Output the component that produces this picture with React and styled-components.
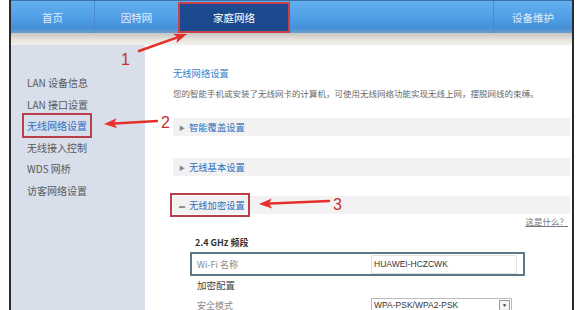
import React from 'react';
import styled, { createGlobalStyle } from 'styled-components';

const GlobalStyle = createGlobalStyle`
  html, body {
    margin: 0;
    padding: 0;
    background: #fff;
  }
  body {
    font-family: "Noto Sans CJK SC", "Liberation Sans", sans-serif;
  }
`;

const Page = styled.div`
  position: relative;
  width: 577px;
  height: 310px;
  overflow: hidden;
  padding-left: 9px;
  box-sizing: border-box;
  background: #fff;
`;

const Frame = styled.div`
  width: 565px;
  height: 310px;
  box-sizing: border-box;
  border-left: 2px solid #2a2a2e;
  border-right: 2px solid #2a2a2e;
  display: flex;
  flex-direction: column;
`;

const TopBar = styled.div`
  height: 33px;
  flex-shrink: 0;
  display: flex;
  align-items: stretch;
  background: linear-gradient(#63afef 0%, #4d9ce4 60%, #4590d8 85%, #6d9fcc 100%);
  border-top: 1px solid #3a6fa8;
  box-sizing: border-box;
`;

const Tab = styled.div`
  width: ${p => p.$w}px;
  display: flex;
  align-items: center;
  justify-content: center;
  font-size: 10.5px;
  color: #e1eefb;
  border-right: ${p => (p.$divider ? '1px solid #4a8bcc' : 'none')};
  box-sizing: border-box;
`;

const ActiveTab = styled(Tab)`
  background: #1d4a8e;
  color: #fff;
  border: 2px solid #c9414c;
  margin: 1px 0 0;
`;

const Spacer = styled.div`
  flex: 1;
  border-right: 1px solid #4a8bcc;
`;

const Band = styled.div`
  height: 12px;
  flex-shrink: 0;
  background: linear-gradient(#c6c4c2, #e9e6e0 60%, #f3f1ec);
`;

const Body = styled.div`
  flex: 1;
  display: flex;
  min-height: 0;
`;

const Sidebar = styled.div`
  width: 134px;
  background: #d8deea;
  padding: 27px 0 0 16px;
  box-sizing: border-box;
  display: flex;
  flex-direction: column;
`;

const SideItem = styled.div`
  height: 21.5px;
  flex-shrink: 0;
  display: flex;
  align-items: center;
  font-size: 10px;
  color: ${p => (p.$active ? '#2f6fc2' : '#5a5a5a')};
`;

const SideBox = styled.span`
  outline: ${p => (p.$boxed ? '2px solid #b8404a' : 'none')};
  outline-offset: 3px;
`;

const Main = styled.div`
  flex: 1;
  background: #fff;
  padding: 21px 2px 0 28px;
  box-sizing: border-box;
  display: flex;
  flex-direction: column;
  overflow: hidden;

  & > * {
    flex-shrink: 0;
  }
`;

const Title = styled.div`
  font-size: 9.3px;
  color: #3a82c9;
  height: 14px;
  line-height: 14px;
`;

const Desc = styled.div`
  margin-top: 6px;
  font-size: 8.5px;
  color: #6a6a6a;
  height: 14px;
  line-height: 14px;
  white-space: nowrap;
`;

const SectionBar = styled.div`
  margin-top: ${p => p.$mt}px;
  height: 18px;
  background: #f2f2f2;
  display: flex;
  align-items: center;
  padding-left: 6px;
  gap: 4px;
  font-size: 9.3px;
  color: #2f6fbd;
`;

const SectionLabel = styled.span`
  display: inline-flex;
  align-items: center;
  gap: 4px;
  outline: ${p => (p.$boxed ? '2px solid #b8404a' : 'none')};
  outline-offset: 3px;
  margin-left: ${p => (p.$boxed ? '-4px' : '0')};
  padding-left: ${p => (p.$boxed ? '4px' : '0')};
`;

const Marker = styled.span`
  font-size: 6px;
  color: #888;
`;

const HelpRow = styled.div`
  display: flex;
  justify-content: flex-end;
  padding-right: 2px;
  margin-top: 1px;
  height: 12px;
`;

const HelpLink = styled.span`
  font-size: 8.5px;
  line-height: 12px;
  color: #777;
  text-decoration: underline;
`;

const Form = styled.div`
  padding-left: 17px;
  display: flex;
  flex-direction: column;

  & > * {
    flex-shrink: 0;
  }
`;

const GroupTitle = styled.div`
  margin-top: 9px;
  font-size: 9px;
  font-weight: 700;
  color: #333;
  padding-left: 5px;
  height: 14px;
  line-height: 14px;
`;

const FieldRow = styled.div`
  width: 335px;
  height: 24px;
  box-sizing: border-box;
  display: flex;
  align-items: center;
  border: ${p => (p.$focus ? '2px solid #5f7686' : '2px solid transparent')};
  padding-left: 5px;
  margin-top: ${p => p.$mt || 0}px;
`;

const FieldLabel = styled.div`
  width: 174px;
  font-size: 9px;
  color: #8a8a8a;
`;

const Input = styled.div`
  width: 146px;
  height: 19px;
  box-sizing: border-box;
  border: 1px solid #e2e2e2;
  font-family: "Liberation Sans", sans-serif;
  font-size: 8.5px;
  color: #333;
  display: flex;
  align-items: center;
  padding-left: 2px;
`;

const SubTitle = styled.div`
  margin-top: 2px;
  padding-left: 7px;
  font-size: 9.5px;
  color: #444;
  height: 15px;
  line-height: 15px;
`;

const Select = styled.div`
  width: 141px;
  height: 14px;
  box-sizing: border-box;
  border: 1px solid #bbb;
  font-family: "Liberation Sans", sans-serif;
  font-size: 8.5px;
  color: #333;
  display: flex;
  align-items: center;
  justify-content: space-between;
  padding: 0 1px 0 2px;
`;

const SelectBtn = styled.span`
  width: 9px;
  height: 9px;
  border: 1px solid #999;
  background: #f4f4f4;
  display: flex;
  align-items: center;
  justify-content: center;
  font-size: 5px;
  color: #333;
`;

const Overlay = styled.svg`
  position: absolute;
  left: 0;
  top: 0;
  pointer-events: none;
`;

const Num = styled.text`
  font-family: "Liberation Sans", sans-serif;
  font-size: 16px;
  fill: #c4302e;
`;

const tabs = [
  { label: '首页', w: 84, divider: true },
  { label: '因特网', w: 83, divider: false },
];

const sideItems = ['LAN 设备信息', 'LAN 接口设置', '无线网络设置', '无线接入控制', 'WDS 网桥', '访客网络设置'];

const Arrow = ({ x1, y1, x2, y2 }) => {
  const dx = x2 - x1;
  const dy = y2 - y1;
  const len = Math.sqrt(dx * dx + dy * dy);
  const ux = dx / len;
  const uy = dy / len;
  const bx = x2 - ux * 13;
  const by = y2 - uy * 13;
  const px = -uy;
  const py = ux;
  const head = `${x2},${y2} ${bx + px * 5},${by + py * 5} ${bx + ux * 3},${by + uy * 3} ${bx - px * 5},${by - py * 5}`;
  return (
    <g>
      <path d={`M${x1},${y1} L${bx + ux * 2},${by + uy * 2}`} stroke="#e5302c" strokeWidth="2.5" strokeLinecap="round" />
      <polygon points={head} fill="#e5302c" />
    </g>
  );
};

export default function App() {
  return (
    <Page>
      <GlobalStyle />
      <Frame>
        <TopBar>
          {tabs.map(t => (
            <Tab key={t.label} $w={t.w} $divider={t.divider}>{t.label}</Tab>
          ))}
          <ActiveTab $w={112}>家庭网络</ActiveTab>
          <Spacer />
          <Tab $w={78}>设备维护</Tab>
        </TopBar>
        <Band />
        <Body>
          <Sidebar>
            {sideItems.map((s, i) => (
              <SideItem key={s} $active={i === 2}>
                <SideBox $boxed={i === 2}>{s}</SideBox>
              </SideItem>
            ))}
          </Sidebar>
          <Main>
            <Title>无线网络设置</Title>
            <Desc>您的智能手机或安装了无线网卡的计算机，可使用无线网络功能实现无线上网，摆脱网线的束缚。</Desc>
            <SectionBar $mt={18}>
              <SectionLabel><Marker>▶</Marker>智能覆盖设置</SectionLabel>
            </SectionBar>
            <SectionBar $mt={22}>
              <SectionLabel><Marker>▶</Marker>无线基本设置</SectionLabel>
            </SectionBar>
            <SectionBar $mt={20}>
              <SectionLabel $boxed><Marker>▬</Marker>无线加密设置</SectionLabel>
            </SectionBar>
            <HelpRow>
              <HelpLink>这是什么？</HelpLink>
            </HelpRow>
            <Form>
              <GroupTitle>2.4 GHz 频段</GroupTitle>
              <FieldRow $focus $mt={2}>
                <FieldLabel>Wi-Fi 名称</FieldLabel>
                <Input>HUAWEI-HCZCWK</Input>
              </FieldRow>
              <SubTitle>加密配置</SubTitle>
              <FieldRow>
                <FieldLabel>安全模式</FieldLabel>
                <Select>
                  WPA-PSK/WPA2-PSK
                  <SelectBtn>▼</SelectBtn>
                </Select>
              </FieldRow>
            </Form>
          </Main>
        </Body>
      </Frame>
      <Overlay width="577" height="310" viewBox="0 0 577 310">
        <Arrow x1={139} y1={51} x2={187} y2={34} />
        <Num x="121" y="65">1</Num>
        <Arrow x1={157} y1={121} x2={104} y2={124} />
        <Num x="161" y="128">2</Num>
        <Arrow x1={329} y1={201} x2={259} y2={204} />
        <Num x="333" y="210">3</Num>
      </Overlay>
    </Page>
  );
}
